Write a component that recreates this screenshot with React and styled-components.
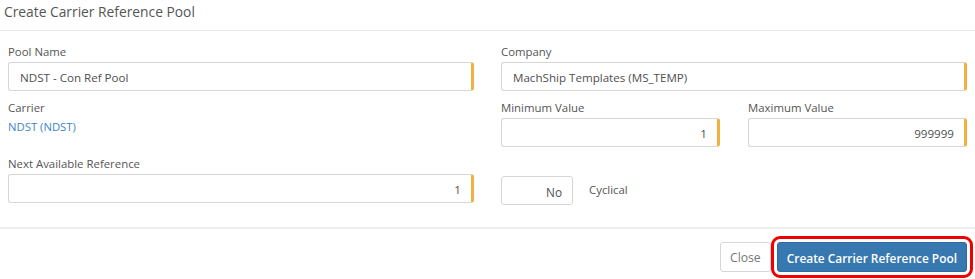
import React from "react";
import styled, { createGlobalStyle } from "styled-components";

const Global = createGlobalStyle`
  html, body { margin: 0; padding: 0; background: #fff; }
  body { font-family: "Open Sans", "Noto Sans", sans-serif; color: #555; }
  * { box-sizing: border-box; }
`;

const Modal = styled.div`
  width: 975px;
  height: 279px;
  background: #fff;
  display: flex;
  flex-direction: column;
`;

const Header = styled.div`
  height: 31px;
  padding: 3px 4px 0;
  border-bottom: 1px solid #e9e9e9;
`;

const Title = styled.h4`
  margin: 0;
  font-size: 13.8px;
  font-weight: 400;
  line-height: 18px;
  color: #555;
`;

const Body = styled.div`
  padding: 13px 8px 22px;
  display: grid;
  grid-template-columns: 1fr 1fr;
  column-gap: 27px;
  row-gap: 9px;
  border-bottom: 2px solid #eeeeee;
`;

const Field = styled.div`
  display: flex;
  flex-direction: column;
`;

const Label = styled.label`
  font-size: 11.4px;
  line-height: 16px;
  color: #555;
  margin-bottom: 2px;
`;

const Input = styled.div`
  height: 29px;
  border: 1px solid #d6d6d6;
  border-right: ${(p) => (p.$required ? "3px solid #f4b03e" : "1px solid #d6d6d6")};
  border-radius: 3px;
  font-size: 11.6px;
  color: #4f4f4f;
  display: flex;
  align-items: center;
  justify-content: ${(p) => (p.$align === "right" ? "flex-end" : "flex-start")};
  padding: 1px 10px 0 11px;
`;

const Pair = styled.div`
  display: grid;
  grid-template-columns: 1fr 1fr;
  column-gap: 28px;
`;

const LinkValue = styled.span`
  font-size: 11.3px;
  line-height: 18px;
  color: #3b86c6;
`;

const ToggleRow = styled.div`
  display: flex;
  align-items: center;
  gap: 16px;
  padding-top: 20px;
`;

const Toggle = styled.button`
  width: 72px;
  height: 29px;
  background: #fff;
  border: 1px solid #d6d6d6;
  border-radius: 3px;
  font-family: inherit;
  font-size: 11.8px;
  color: #4f4f4f;
  text-align: right;
  padding: 2px 10px 0 0;
`;

const ToggleLabel = styled.span`
  font-size: 11.4px;
  color: #555;
  margin-top: -3px;
`;

const Footer = styled.div`
  display: flex;
  justify-content: flex-end;
  align-items: center;
  gap: 6px;
  padding: 13px 8px 0;
`;

const Button = styled.button`
  height: 30px;
  border-radius: 3px;
  font-family: inherit;
  padding: 1px 9px 0;
  cursor: pointer;
  ${(p) =>
    p.$primary
      ? `
    font-size: 11.9px;
    background: #3878b0;
    border: 1px solid #2f6aa0;
    color: #fff;
    font-weight: 600;
    outline: 3px solid #f00000;
    outline-offset: 3px;
  `
      : `
    font-size: 12.2px;
    background: #fff;
    border: 1px solid #d6d6d6;
    color: #777;
  `}
`;

export default function App() {
  return (
    <Modal>
      <Global />
      <Header>
        <Title>Create Carrier Reference Pool</Title>
      </Header>
      <Body>
        <Field>
          <Label>Pool Name</Label>
          <Input $required>NDST - Con Ref Pool</Input>
        </Field>
        <Field>
          <Label>Company</Label>
          <Input $required>MachShip Templates (MS_TEMP)</Input>
        </Field>
        <Field>
          <Label>Carrier</Label>
          <LinkValue>NDST (NDST)</LinkValue>
        </Field>
        <Pair>
          <Field>
            <Label>Minimum Value</Label>
            <Input $required $align="right">1</Input>
          </Field>
          <Field>
            <Label>Maximum Value</Label>
            <Input $required $align="right">999999</Input>
          </Field>
        </Pair>
        <Field>
          <Label>Next Available Reference</Label>
          <Input $required $align="right">1</Input>
        </Field>
        <ToggleRow>
          <Toggle>No</Toggle>
          <ToggleLabel>Cyclical</ToggleLabel>
        </ToggleRow>
      </Body>
      <Footer>
        <Button>Close</Button>
        <Button $primary>Create Carrier Reference Pool</Button>
      </Footer>
    </Modal>
  );
}
